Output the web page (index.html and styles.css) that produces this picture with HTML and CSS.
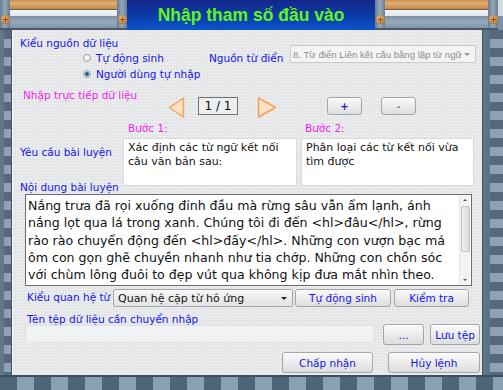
FILE: index.html
```
<!DOCTYPE html>
<html lang="vi">

<head>
    <meta charset="UTF-8">
    <meta name="viewport" content="width=device-width, initial-scale=1.0">
    <title>Nhập tham số đầu vào</title>
    <link rel="stylesheet" href="styles.css">
</head>

<body>
    <div class="window">
        <div class="topbar">
            <div class="plank">
                <span class="post"><span class="bolt"></span></span>
                <span class="board"></span>
                <span class="post"><span class="bolt"></span></span>
            </div>
            <div class="title">
                <h1>Nhập tham số đầu vào</h1>
            </div>
            <div class="plank plank-right">
                <span class="post"><span class="bolt"></span></span>
                <span class="board"></span>
                <span class="post"><span class="bolt"></span></span>
                <span class="corner"></span>
            </div>
        </div>

        <div class="middle">
            <div class="edge edge-left"></div>

            <div class="panel">
                <!-- nguon du lieu -->
                <div class="source">
                    <div class="label source-title">Kiểu nguồn dữ liệu</div>
                    <div class="radio radio-auto"><span class="dot"></span>Tự động sinh</div>
                    <div class="label dict-label">Nguồn từ điển</div>
                    <div class="combo combo-disabled dict-combo">
                        <span class="combo-text">8. Từ điển Liên kết cấu bằng lặp từ ngữ</span>
                        <span class="arrow"></span>
                    </div>
                    <div class="radio radio-user"><span class="dot checked"></span>Người dùng tự nhập</div>
                </div>

                <!-- nhap truc tiep -->
                <div class="direct">
                    <div class="pink">Nhập trực tiếp dữ liệu</div>
                    <div class="pager">
                        <svg class="tri" width="17" height="21" viewBox="0 0 17 21">
                            <polygon points="15.5,1 15.5,20 1.5,10.5" fill="#fde2c6" stroke="#f2a35a" stroke-width="1.5" stroke-linejoin="round" />
                        </svg>
                        <div class="page-box">1 / 1</div>
                        <svg class="tri tri-next" width="20" height="21" viewBox="0 0 20 21">
                            <polygon points="1.5,1 1.5,20 18.5,10.5" fill="#fde2c6" stroke="#f2a35a" stroke-width="1.5" stroke-linejoin="round" />
                        </svg>
                        <button class="btn btn-small btn-plus">+</button>
                        <button class="btn btn-small btn-minus">-</button>
                    </div>
                </div>

                <!-- cac buoc -->
                <div class="steps">
                    <div class="pink step-title step-one">Bước 1:</div>
                    <div class="pink step-title step-two">Bước 2:</div>
                    <div class="label req-label">Yêu cầu bài luyện</div>
                    <div class="step-box">Xác định các từ ngữ kết nối câu văn bản sau:</div>
                    <div class="step-box">Phân loại các từ kết nối vừa tìm được</div>
                </div>

                <div class="label content-label">Nội dung bài luyện</div>
                <div class="content-box">
                    <p class="content-text">Nắng trưa đã rọi xuống đỉnh đầu mà rừng sâu vẫn ẩm lạnh, ánh nắng lọt qua lá trong xanh. Chúng tôi đi đến &lt;hl&gt;đâu&lt;/hl&gt;, rừng rào rào chuyển động đến &lt;hl&gt;đấy&lt;/hl&gt;. Những con vượn bạc má ôm con gọn ghẽ chuyền nhanh như tia chớp. Những con chồn sóc với chùm lông đuôi to đẹp vút qua không kịp đưa mắt nhìn theo.</p>
                    <div class="scrollbar">
                        <span class="sb-arrow sb-up"></span>
                        <span class="sb-thumb"></span>
                        <span class="sb-space"></span>
                        <span class="sb-arrow sb-down"></span>
                    </div>
                </div>

                <!-- quan he tu -->
                <div class="relation">
                    <div class="label relation-label">Kiểu quan hệ từ</div>
                    <div class="combo relation-combo">
                        <span class="combo-text">Quan hệ cặp từ hô ứng</span>
                        <span class="arrow"></span>
                    </div>
                    <button class="btn btn-auto">Tự động sinh</button>
                    <button class="btn btn-check">Kiểm tra</button>
                </div>

                <div class="label file-label">Tên tệp dữ liệu cần chuyển nhập</div>
                <div class="file-row">
                    <div class="file-input"></div>
                    <button class="btn btn-browse">...</button>
                    <button class="btn btn-save">Lưu tệp</button>
                </div>

                <div class="actions">
                    <button class="btn btn-ok">Chấp nhận</button>
                    <button class="btn btn-cancel">Hủy lệnh</button>
                </div>
            </div>

            <div class="edge edge-right"></div>
        </div>

        <div class="edge-bottom"></div>
    </div>
</body>

</html>
```

FILE: styles.css
```
* {
    margin: 0;
    padding: 0;
    box-sizing: border-box;
}

body {
    background-color: #6d8296;
    font-family: "DejaVu Sans", sans-serif;
}

.window {
    width: 503px;
    height: 390px;
    display: grid;
    grid-template-rows: 30px 345px 15px;
    overflow: hidden;
}

/* top bar */

.topbar {
    display: grid;
    grid-template-columns: 127px 248px 128px;
}

.plank {
    display: grid;
    grid-template-columns: 10px 1fr 10px;
}

.plank-right {
    grid-template-columns: 10px 1fr 10px 5px;
}

.post {
    display: flex;
    justify-content: center;
    padding-top: 15px;
    background: linear-gradient(to right, #687d92, #95a8ba 50%, #687d92);
    border-bottom: 2px solid #4a5968;
}

.bolt {
    width: 9px;
    height: 9px;
    border-radius: 50%;
    background:
        linear-gradient(#8a5a2a, #8a5a2a) center / 1px 5px no-repeat,
        linear-gradient(#8a5a2a, #8a5a2a) center / 5px 1px no-repeat,
        radial-gradient(circle at 40% 35%, #eab476, #c3823e 65%, #8a5a2a);
}

.board {
    background: linear-gradient(to bottom,
            #c88e50 0, #e2b074 3px, #d49c5e 6px, #c38848 9px,
            #6e5e4c 9px, #6e5e4c 10px,
            #f3f4f5 10px, #e3e6e9 16px,
            #7d91a6 16px, #97a9ba 22px, #7f93a8 28px,
            #4a5968 28px);
}

.corner {
    background: linear-gradient(to bottom, #d5dade 0, #d5dade 16px, #7b90a4 16px);
}

.title {
    display: flex;
    align-items: center;
    justify-content: center;
    background: linear-gradient(to bottom, #14268a, #0b3cab 55%, #0a55cc);
}

.title h1 {
    font-family: "Liberation Sans", sans-serif;
    font-size: 17.5px;
    font-weight: bold;
    color: #62f23c;
    text-shadow: 0 0 1px #0b4a1c;
    padding-top: 1px;
}

/* frame edges */

.middle {
    display: grid;
    grid-template-columns: 12px 470px 21px;
}

.edge {
    background:
        repeating-linear-gradient(to bottom, #56697c 0, #56697c 9px, #8ea2b4 9px, #8ea2b4 18px);
}

.edge-left {
    box-shadow: inset 4px 0 0 #62778b, inset -1px 0 0 #3f5163;
}

.edge-right {
    box-shadow: inset 1px 0 0 #3f5163, inset 8px 0 0 #5e7387;
}

.edge-bottom {
    background: repeating-linear-gradient(to right, #4e6478 0, #4e6478 17px, #8aa0b3 17px, #8aa0b3 34px);
    border-top: 2px solid #3d4f61;
}

/* main panel */

.panel {
    display: flex;
    flex-direction: column;
    background-color: #e4e6e8;
    background-image: radial-gradient(circle, rgba(255, 255, 255, 0.7) 0.6px, transparent 1px);
    background-size: 3px 3px;
    box-shadow: inset 1px 0 0 #f4f5f6;
}

.label {
    color: #1414f0;
    font-size: 10.5px;
    line-height: 13px;
    white-space: nowrap;
}

.pink {
    color: #f01ef0;
    font-size: 10.5px;
    line-height: 13px;
    white-space: nowrap;
}

/* source */

.source {
    display: grid;
    grid-template-columns: 62px 127px 81px 186px;
    grid-template-rows: 14px 16px 16px;
    margin-top: 6px;
    padding-left: 8px;
}

.source-title {
    grid-column: 1 / 3;
    grid-row: 1;
    line-height: 14px;
}

.radio {
    display: flex;
    align-items: center;
    gap: 5px;
    color: #1414f0;
    font-size: 10.5px;
    white-space: nowrap;
}

.radio-auto {
    grid-column: 2 / 4;
    grid-row: 2;
}

.radio-user {
    grid-column: 2 / 4;
    grid-row: 3;
}

.dot {
    width: 8px;
    height: 8px;
    margin-left: 1px;
    border-radius: 50%;
    border: 1px solid #9aa0a6;
    background: radial-gradient(circle at 40% 35%, #ffffff, #dfe2e5);
}

.dot.checked {
    background: radial-gradient(circle, #1b4f8c 0, #2a6cb0 1.8px, #d9dde1 2.4px, #ffffff);
}

.dict-label {
    grid-column: 3;
    grid-row: 2;
    align-self: center;
}

.combo {
    display: flex;
    align-items: center;
    justify-content: space-between;
    height: 18px;
    padding: 0 5px 0 4px;
    border: 1px solid #a4a8ac;
    border-radius: 2px;
    background: linear-gradient(to bottom, #f8f8f8, #e1e2e3);
    white-space: nowrap;
}

.combo-disabled {
    background: #f3f4f5;
    border-color: #c9ccce;
    padding-left: 2px;
}

.dict-combo {
    grid-column: 4;
    grid-row: 1 / 3;
    margin-top: 9px;
}

.dict-combo .combo-text {
    font-family: "Liberation Sans", sans-serif;
    font-size: 9.6px;
    color: #8c8c8c;
}

.arrow {
    width: 0;
    height: 0;
    border-left: 3px solid transparent;
    border-right: 3px solid transparent;
    border-top: 3px solid #222;
}

.combo-disabled .arrow {
    border-top-color: #9a9a9a;
}

/* direct input */

.direct {
    display: grid;
    grid-template-columns: 145px auto;
    height: 29px;
    margin-top: 7px;
    padding-left: 11px;
}

.pager {
    display: flex;
    align-items: flex-start;
    margin-top: 8px;
}

.page-box {
    width: 40px;
    height: 18px;
    margin-left: 13px;
    border: 1px solid #6f6f6f;
    background-color: #eceeef;
    font-size: 12px;
    line-height: 16px;
    text-align: center;
    color: #111;
}

.tri-next {
    margin-left: 19px;
}

.btn {
    font-family: "DejaVu Sans", sans-serif;
    font-size: 10.5px;
    color: #1414e8;
    border: 1px solid #a3a6a9;
    border-radius: 3px;
    background: linear-gradient(to bottom, #fbfbfb, #ececec 50%, #dcdddf);
    box-shadow: inset 0 1px 0 #ffffff;
    white-space: nowrap;
}

.btn-small {
    width: 35px;
    height: 18px;
    font-size: 10px;
    font-weight: bold;
    color: #2020d0;
}

.btn-plus {
    margin-left: 50px;
}

.btn-minus {
    margin-left: 19px;
    color: #7f8cc8;
}

/* steps */

.steps {
    display: grid;
    grid-template-columns: 99px 174px 173px;
    grid-template-rows: 15px 48px;
    column-gap: 4px;
    row-gap: 2px;
    margin-top: 3px;
    padding-left: 8px;
}

.step-title {
    grid-row: 1;
    line-height: 15px;
}

.step-one {
    grid-column: 2;
    padding-left: 5px;
}

.step-two {
    grid-column: 3;
    padding-left: 4px;
}

.req-label {
    grid-column: 1;
    grid-row: 2;
    margin-top: 8px;
}

.step-box {
    grid-row: 2;
    padding: 2px 4px;
    background-color: #ffffff;
    border: 1px solid #dadcde;
    font-size: 11px;
    line-height: 14px;
    color: #111;
}

.content-label {
    margin-top: -5px;
    padding-left: 8px;
}

/* content */

.content-box {
    display: flex;
    justify-content: space-between;
    width: 447px;
    height: 92px;
    margin-left: 13px;
    border: 1px solid #6c6c6c;
    background-color: #ffffff;
}

.content-text {
    width: 432px;
    padding: 2px 0 0 2px;
    font-size: 12.6px;
    line-height: 17.3px;
    color: #111;
}

.scrollbar {
    display: flex;
    flex-direction: column;
    width: 11px;
    margin-right: 1px;
    background-color: #f3f3f3;
    border-left: 1px solid #e6e6e6;
}

.sb-arrow {
    display: flex;
    justify-content: center;
    height: 10px;
    padding-top: 4px;
}

.sb-arrow::before {
    content: "";
    width: 0;
    height: 0;
    border-left: 2px solid transparent;
    border-right: 2px solid transparent;
}

.sb-up::before {
    border-bottom: 2px solid #555;
}

.sb-down::before {
    border-top: 2px solid #555;
}

.sb-thumb {
    height: 46px;
    margin: 1px 0 0 1px;
    border: 1px solid #c2c2c2;
    border-radius: 2px;
    background: linear-gradient(to right, #f0f0f0, #dadada);
}

.sb-space {
    flex: 1;
}

/* relation row */

.relation {
    display: flex;
    height: 18px;
    margin-top: 3px;
    padding-left: 15px;
}

.relation-label {
    width: 86px;
    line-height: 16px;
}

.relation-combo {
    width: 180px;
}

.relation-combo .combo-text {
    font-size: 11px;
    color: #111;
}

.btn-auto {
    width: 96px;
    margin-left: 2px;
}

.btn-check {
    width: 75px;
    margin-left: 3px;
}

/* file row */

.file-label {
    margin-top: 6px;
    padding-left: 15px;
    line-height: 12px;
}

.file-row {
    display: flex;
    align-items: flex-start;
    height: 21px;
    margin-top: -1px;
    padding-left: 13px;
}

.file-input {
    width: 349px;
    height: 18px;
    margin-top: 1px;
    background-color: #f1f2f3;
    border: 1px solid #e0e2e4;
}

.btn-browse {
    width: 41px;
    height: 21px;
    margin-left: 9px;
}

.btn-save {
    width: 50px;
    height: 21px;
    margin-left: 6px;
}

/* actions */

.actions {
    display: flex;
    justify-content: flex-end;
    gap: 15px;
    margin-top: 7px;
    padding-right: 2px;
}

.actions .btn {
    height: 21px;
}

.btn-ok {
    width: 91px;
}

.btn-cancel {
    width: 92px;
}
```
